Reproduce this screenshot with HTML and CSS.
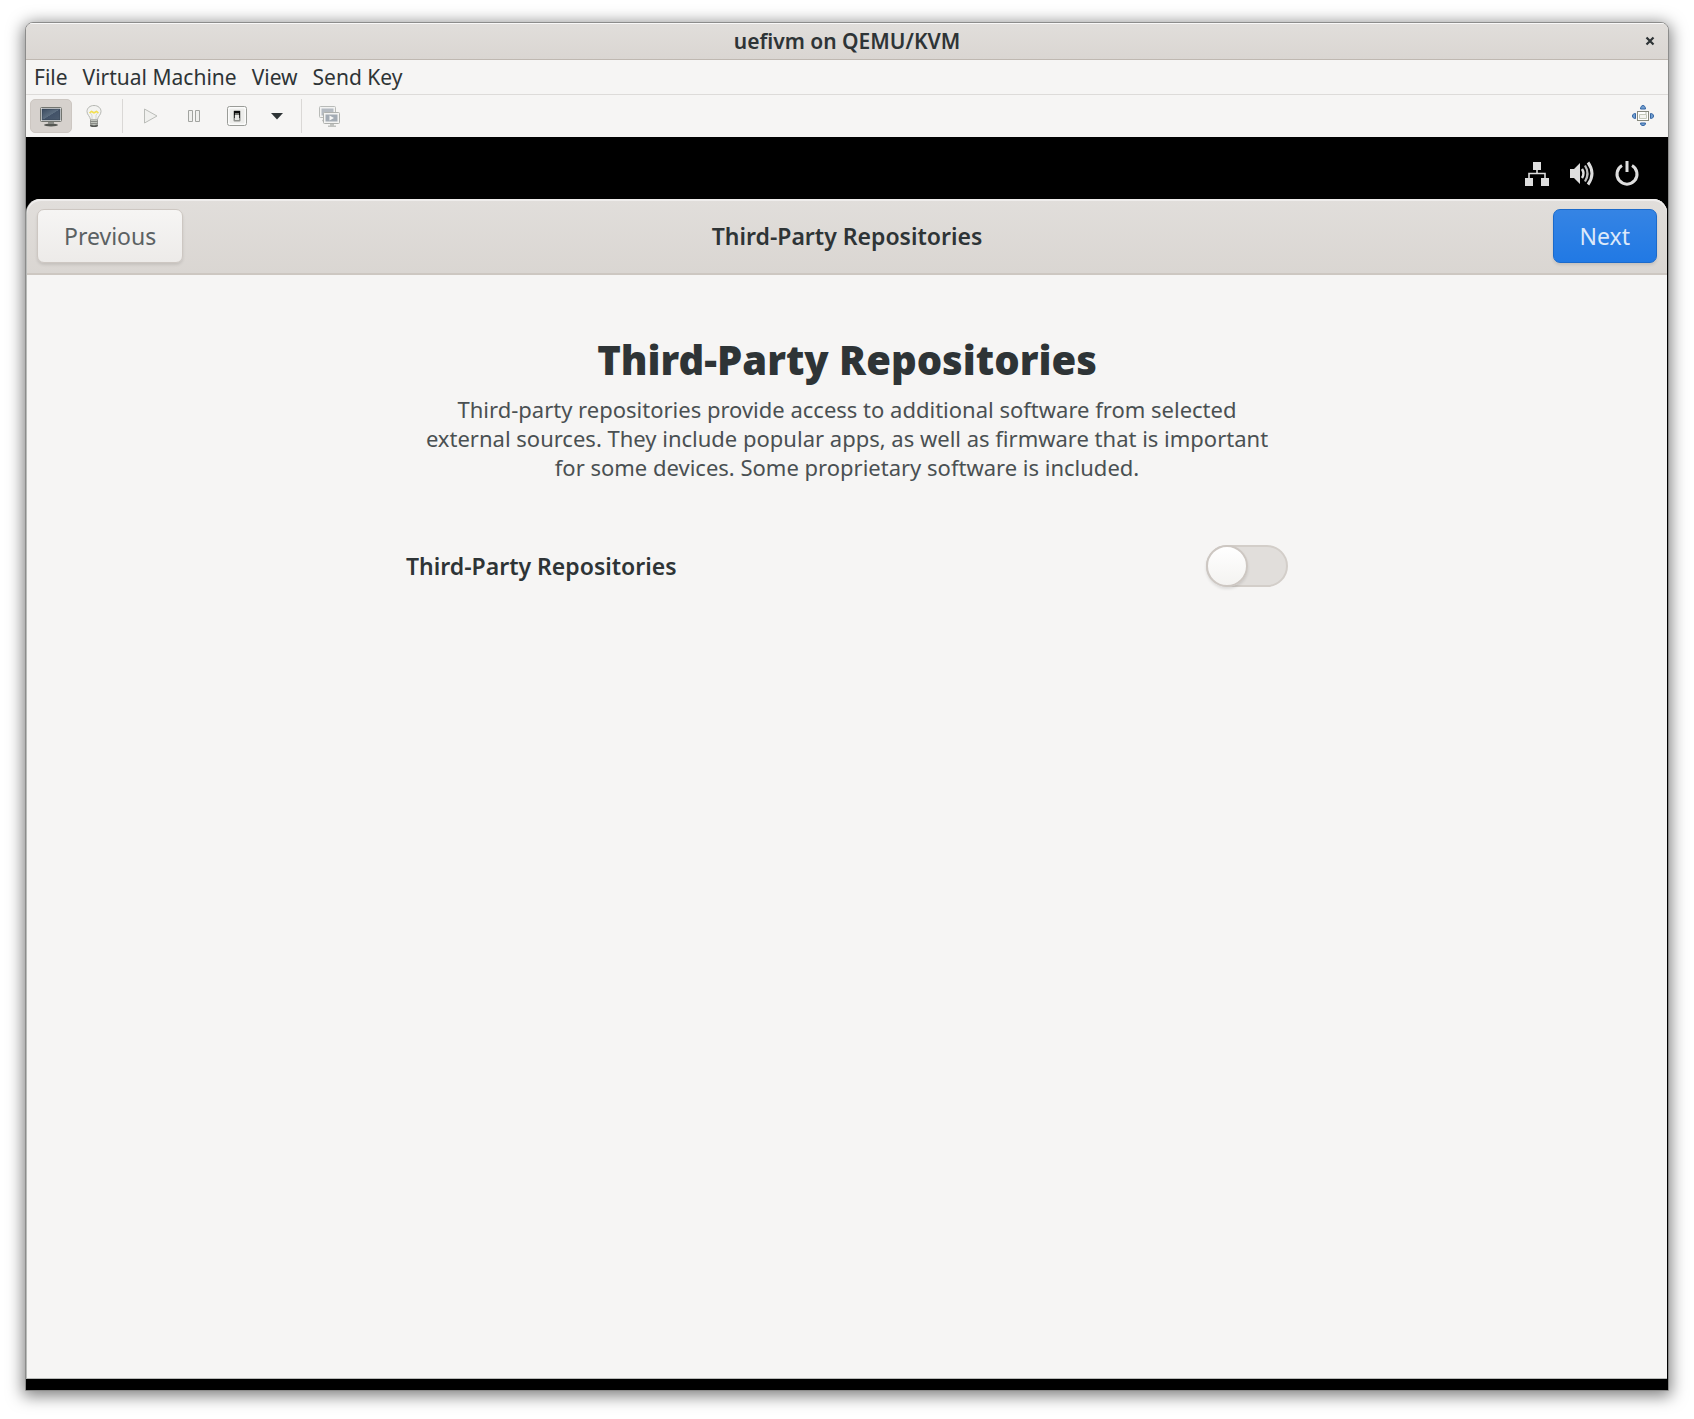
FILE: index.html
```html
<!DOCTYPE html>
<html lang="en">
<head>
<meta charset="utf-8">
<title>uefivm on QEMU/KVM</title>
<link rel="stylesheet" href="styles.css">
</head>
<body>
<div class="window">
  <header class="titlebar">
    <h1 class="titlebar-title">uefivm on QEMU/KVM</h1>
    <button class="close" type="button" aria-label="Close">
      <svg width="10" height="10" viewBox="0 0 10 10"><path d="M1.5 1.5 8.5 8.5M8.5 1.5 1.5 8.5" stroke="#2e3436" stroke-width="2.2" fill="none"/></svg>
    </button>
  </header>

  <nav class="menubar">
    <button type="button">File</button>
    <button type="button">Virtual Machine</button>
    <button type="button">View</button>
    <button type="button">Send Key</button>
  </nav>

  <div class="toolbar">
    <button class="tool active" type="button" aria-label="Console">
      <svg width="24" height="24" viewBox="0 0 24 24">
        <defs><linearGradient id="screen" x1="0" y1="0" x2="1" y2="1"><stop offset="0" stop-color="#3a4a5f"/><stop offset=".5" stop-color="#5d6e80"/><stop offset=".52" stop-color="#425268"/><stop offset="1" stop-color="#4b5b6e"/></linearGradient></defs>
        <ellipse cx="12" cy="21" rx="7" ry="1.5" fill="#555753"/>
        <path d="M9 17h6v3H9z" fill="#888a85"/>
        <rect x="1.5" y="3.5" width="21" height="14" rx="1" fill="#eeeeec" stroke="#72746f"/>
        <rect x="3" y="5" width="18" height="11" fill="url(#screen)" stroke="#2f3c4d" stroke-width=".6"/>
      </svg>
    </button>
    <button class="tool" type="button" aria-label="Details">
      <svg width="24" height="24" viewBox="0 0 24 24">
        <ellipse cx="12" cy="21.500" rx="4" ry="1.500" fill="#555753"/>
        <path d="M8.500 15h7v5.500q-3.500 1.500-7 0z" fill="#d3d7cf" stroke="#888a85" stroke-width=".8"/>
        <path d="M8.500 17.300h7M8.500 19.300h7" stroke="#777974"/>
        <path d="M12 1.500c-4.200 0-7 2.700-7 6 0 3.500 3 4.500 3.500 8h7c.5-3.500 3.500-4.500 3.500-8 0-3.300-2.800-6-7-6z" fill="#f3f3f1" stroke="#b5b7b2"/>
        <path d="M10 15V11L7.800 8.500 10 7l2 1.500L14 7l2.200 1.500L14 11v4" fill="none" stroke="#c9c9c4" stroke-width=".7"/>
        <path d="M7.500 9 9.500 7.500 12 9l2.500-1.500 2 1.500" fill="none" stroke="#f4e04d" stroke-width="1.500"/>
      </svg>
    </button>
    <span class="separator"></span>
    <button class="tool" type="button" aria-label="Run" disabled>
      <svg width="24" height="24" viewBox="0 0 24 24"><path d="M5.500 5 18 12 5.500 19z" fill="#f0f0ee" stroke="#babcb8"/></svg>
    </button>
    <button class="tool" type="button" aria-label="Pause">
      <svg width="24" height="24" viewBox="0 0 24 24"><path d="M6.500 6.500h4v11h-4zM13.500 6.500h4v11h-4z" fill="#f0f0ee" stroke="#a2a4a0"/></svg>
    </button>
    <button class="tool" type="button" aria-label="Shut down">
      <svg width="24" height="24" viewBox="0 0 24 24">
        <rect x="2.500" y="2.500" width="19" height="19" rx="2" fill="#fbfbfa" stroke="#9a9c98"/>
        <rect x="4.500" y="4.500" width="15" height="15" rx="1" fill="#ededeb"/>
        <rect x="8.500" y="6.500" width="7" height="11" rx="1" fill="#8e908c"/>
        <path d="M9 7h6v4H9z" fill="#0c0c0c"/><path d="M10 9h4v2h-4z" fill="#777974"/><path d="M10 11h4v5h-4z" fill="#e6e6e4"/><path d="M9 11h1v3H9zM14 11h1v3h-1z" fill="#333"/>
      </svg>
    </button>
    <button class="tool narrow" type="button" aria-label="Shut down options">
      <svg width="12" height="7" viewBox="0 0 12 7"><path d="M0 0h12L6 6.500z" fill="#2e3436"/></svg>
    </button>
    <span class="separator"></span>
    <button class="tool" type="button" aria-label="Snapshots">
      <svg width="24" height="24" viewBox="0 0 24 24">
        <rect x="1.500" y="2.500" width="16" height="11" rx="1" fill="#f3f3f2" stroke="#b9bbb8"/>
        <path d="M3.500 4.500h12v7h-12z" fill="#b4bac1"/><path d="M4 16.500h3" stroke="#c6c8c5" stroke-width="1.500"/>
        <rect x="5.500" y="8.500" width="16" height="11" rx="1" fill="#f3f3f2" stroke="#aeb0ad"/>
        <path d="M7.500 10.500h12v7h-12z" fill="#a3abb4"/><path d="M11.500 11.500v5l4.500-2.500z" fill="#f6f6f5"/>
        <path d="M12 20h4v1.500h-4zM10 21.500h8V23h-8z" fill="#c0c2bf"/>
      </svg>
    </button>
    <button class="tool end" type="button" aria-label="Fullscreen">
      <svg width="24" height="24" viewBox="0 0 24 24">
        <g fill="#729fcf" stroke="#3565a4"><path d="M9.500 5c0-2 1-3.500 2.500-3.500S14.500 3 14.500 5zM9.500 19c0 2 1 2.500 2.500 2.500s2.500-.5 2.500-2.500zM4.500 9.500c-2 0-3 1-3 2.500s1 2.500 3 2.500zM19.500 9.500c2 0 3 1 3 2.500s-1 2.500-3 2.500z"/></g>
        <rect x="6.500" y="7.500" width="11" height="9" fill="#fff" stroke="#888a7e"/>
        <path d="M8.500 10.500h7v4h-7z" fill="#f4f4f0" stroke="#c6cabb"/><path d="M14 9h2" stroke="#b7bcab"/>
      </svg>
    </button>
  </div>

  <main class="guest">
    <div class="guest-bar">
      <svg width="26" height="26" viewBox="0 0 26 26" fill="#dedede"><path d="M9 1h8v8H9zM1 17h8v8H1zM17 17h8v8h-8z"/><path d="M13 8v4M5 17v-4.500h16V17" fill="none" stroke="#dedede" stroke-width="1.600"/></svg>
      <svg width="26" height="26" viewBox="0 0 26 26"><path d="M1 8h4l6-6v21l-6-6H1z" fill="#dedede"/><g fill="none" stroke="#dedede"><path d="M13 8q3 4.500 0 9" stroke-width="2.500"/><path d="M16 4.500q5 8 0 16" stroke="#bcbcbc" stroke-width="2.300"/><path d="M19 1.500q8 11 0 22" stroke-width="3"/></g></svg>
      <svg width="26" height="26" viewBox="0 0 26 26"><path d="M8 4.500A10 10 0 1 0 18 4.500M13 0v11" fill="none" stroke="#dedede" stroke-width="3"/></svg>
    </div>
    <section class="setup">
      <header class="setup-bar">
        <button class="btn" type="button">Previous</button>
        <h2 class="setup-bar-title">Third-Party Repositories</h2>
        <button class="btn suggested" type="button">Next</button>
      </header>
      <div class="page">
        <h3 class="page-title">Third-Party Repositories</h3>
        <p class="page-text">Third-party repositories provide access to additional software from selected<br>external sources. They include popular apps, as well as firmware that is important<br>for some devices. Some proprietary software is included.</p>
        <div class="option">
          <label for="third-party">Third-Party Repositories</label>
          <input class="switch" id="third-party" type="checkbox" role="switch">
        </div>
      </div>
    </section>
  </main>
</div>
</body>
</html>
```
FILE: styles.css
```css
*,
*::before {
  box-sizing: border-box;
}

body {
  margin: 0;
  min-height: 100vh;
  padding: 22px 25px 28px;
  display: flex;
  flex-direction: column;
  background: #fff;
  color: #2e3436;
  font-family: "Noto Sans", "Open Sans", sans-serif;
  font-size: 21px;
}

h1, h2, h3, p {
  margin: 0;
}

button {
  margin: 0;
  padding: 0;
  border: 0;
  background: none;
  color: inherit;
  font: inherit;
}

svg {
  display: block;
}

.window {
  flex: 1;
  display: flex;
  flex-direction: column;
  border: 1px solid #8c8c8b;
  border-radius: 8px 8px 0 0;
  background: #f6f5f4;
  box-shadow: 0 3px 16px 2px rgba(0, 0, 0, 0.5);
  overflow: hidden;
}

.titlebar {
  display: grid;
  grid-template-columns: 36px 1fr 36px;
  align-items: center;
  height: 37px;
  border-bottom: 1px solid #bfb8b1;
  background: linear-gradient(#e1dedb, #dad6d2);
  box-shadow: inset 0 1px #f9f8f8;
}

.titlebar-title {
  grid-column: 2;
  text-align: center;
  font-size: 21px;
  font-weight: 600;
  line-height: 28px;
}

.close {
  display: grid;
  place-items: center;
  height: 36px;
}

.menubar {
  display: flex;
  gap: 15px;
  height: 35px;
  padding: 0 8px;
  border-bottom: 1px solid #dddbd9;
}

.toolbar {
  display: flex;
  align-items: center;
  gap: 1px;
  height: 42px;
  padding: 0 4px;
}

.tool {
  display: grid;
  place-items: center;
  width: 42px;
  height: 34px;
  border: 1px solid transparent;
  border-radius: 5px;
}

.tool.active {
  border-color: #cdc7c2;
  background: #d6d1cd;
}

.tool.narrow {
  width: 35px;
}

.tool.end {
  margin-left: auto;
}

.separator {
  width: 1px;
  height: 34px;
  margin: 0 6px;
  background: #dad8d6;
}

.guest {
  flex: 1;
  display: flex;
  flex-direction: column;
  padding: 0 1px 11px 0;
  background: #000;
}

.guest-bar {
  display: flex;
  justify-content: flex-end;
  align-items: center;
  gap: 19px;
  height: 62px;
  padding: 12px 27px 0;
}

.setup {
  flex: 1;
  display: flex;
  flex-direction: column;
  border: 1px solid #b9bbb9;
  border-width: 0 0 1px 1px;
  border-radius: 14px 14px 0 0;
  background: #f6f5f4;
}

.setup-bar {
  display: grid;
  grid-template-columns: 1fr auto 1fr;
  align-items: center;
  height: 76px;
  padding: 0 10px;
  border-bottom: 2px solid #cdc7c1;
  border-radius: 14px 14px 0 0;
  background: linear-gradient(#e1dedb, #dad6d2);
  box-shadow: inset 0 2px #efedec;
}

.setup-bar-title {
  font-size: 23px;
  font-weight: 600;
  line-height: 30px;
}

.btn {
  justify-self: start;
  height: 54px;
  padding: 0 26px;
  border: 1px solid #cdc7c2;
  border-radius: 7px;
  background: linear-gradient(#f6f5f4, #edebe9);
  box-shadow: 0 2px 3px rgba(0, 0, 0, 0.1);
  color: #5b6163;
  font-size: 23px;
}

.btn.suggested {
  justify-self: end;
  border-color: #1b6acb;
  background: linear-gradient(#3584e4, #2179e4);
  color: #dce9fa;
}

.page {
  width: 100%;
  max-width: 882px;
  margin: 0 auto;
  padding: 57px 0;
}

.page-title {
  text-align: center;
  font-size: 40px;
  font-weight: 900;
  line-height: 56px;
}

.page-text {
  margin-top: 7px;
  text-align: center;
  color: #4a5052;
  font-size: 22px;
  line-height: 29px;
}

.option {
  display: flex;
  justify-content: space-between;
  align-items: center;
  margin-top: 63px;
  font-size: 23px;
  font-weight: 600;
  line-height: 30px;
}

.switch {
  appearance: none;
  display: flex;
  width: 82px;
  height: 42px;
  margin: 0;
  border: 2px solid #d3cec9;
  border-radius: 21px;
  background: #e1dedb;
}

.switch::before {
  content: "";
  width: 42px;
  height: 42px;
  margin: -2px;
  border: 2px solid #cdc7c2;
  border-radius: 50%;
  background: linear-gradient(#fff, #f4f3f1);
  box-shadow: 0 2px 3px rgba(0, 0, 0, 0.1);
}

.switch:checked {
  justify-content: flex-end;
  background: #3584e4;
}
```
